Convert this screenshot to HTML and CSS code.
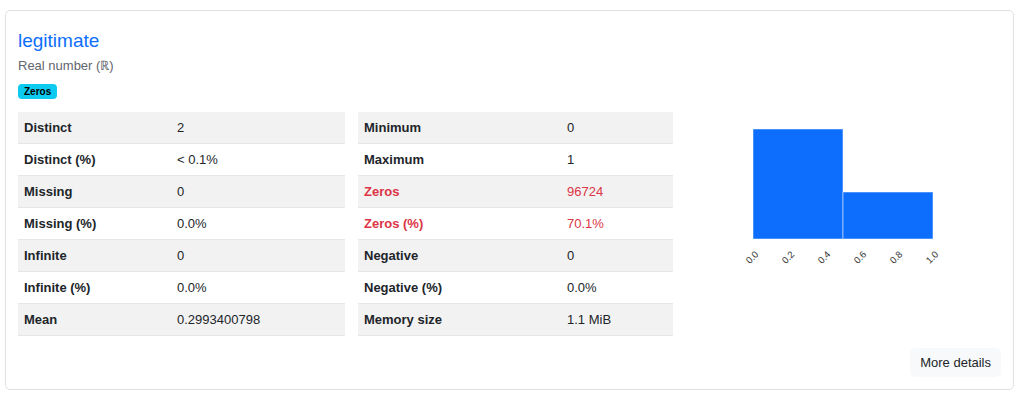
FILE: index.html
```html
<!DOCTYPE html>
<html>
<head>
  <meta name="viewport" content="width=device-width, initial-scale=1">
  <link rel="stylesheet" href="styles.css">
</head>
<body>
  <div class="card">
    <div class="title">legitimate</div>
    <div class="subtitle">Real number (&#8477;)</div>
    <span class="badge">Zeros</span>
    <div class="stats">
      <table class="table first">
        <tr><th>Distinct</th><td>2</td></tr>
        <tr><th>Distinct (%)</th><td>&lt; 0.1%</td></tr>
        <tr><th>Missing</th><td>0</td></tr>
        <tr><th>Missing (%)</th><td>0.0%</td></tr>
        <tr><th>Infinite</th><td>0</td></tr>
        <tr><th>Infinite (%)</th><td>0.0%</td></tr>
        <tr><th>Mean</th><td>0.2993400798</td></tr>
      </table>
      <table class="table second">
        <tr><th>Minimum</th><td>0</td></tr>
        <tr><th>Maximum</th><td>1</td></tr>
        <tr class="alert"><th>Zeros</th><td>96724</td></tr>
        <tr class="alert"><th>Zeros (%)</th><td>70.1%</td></tr>
        <tr><th>Negative</th><td>0</td></tr>
        <tr><th>Negative (%)</th><td>0.0%</td></tr>
        <tr><th>Memory size</th><td>1.1 MiB</td></tr>
      </table>
      <div class="chart">
        <svg width="315" height="170" viewBox="0 0 315 170">
          <rect x="67" y="17" width="90" height="110" fill="#0d6efd" stroke="#fff" stroke-opacity="0.5"/>
          <rect x="157" y="80" width="90" height="47" fill="#0d6efd" stroke="#fff" stroke-opacity="0.5"/>
          <g class="ticks" text-anchor="end">
            <text transform="translate(73 143) rotate(-45)">0.0</text>
            <text transform="translate(109 143) rotate(-45)">0.2</text>
            <text transform="translate(145 143) rotate(-45)">0.4</text>
            <text transform="translate(181 143) rotate(-45)">0.6</text>
            <text transform="translate(217 143) rotate(-45)">0.8</text>
            <text transform="translate(253 143) rotate(-45)">1.0</text>
          </g>
        </svg>
      </div>
    </div>
    <div class="actions">
      <button class="more">More details</button>
    </div>
  </div>
</body>
</html>
```

FILE: styles.css
```css
* { box-sizing: border-box; }
body { margin: 10px 10px 0 5px; font-family: 'Liberation Sans', Arial, sans-serif; color: #212529; background: #fff; }
.card { border: 1px solid #dfe1e4; border-radius: 5px; padding: 12px; }
.title { margin-top: 6px; font-size: 19px; line-height: 23px; color: #0d6efd; }
.subtitle { margin-top: 4px; font-size: 13px; line-height: 20px; color: #5f666d; }
.badge { display: inline-block; margin-top: 8px; padding: 2px 6px; border-radius: 4px; background: #0dcaf0; color: #000; font-size: 10px; font-weight: bold; line-height: 11px; }
.stats { display: grid; grid-template-columns: 327px 315px 1fr; column-gap: 13px; margin-top: 13px; }
.table { border-collapse: collapse; width: 100%; font-size: 13px; line-height: 19px; }
.table th, .table td { padding: 6px 7px 6px 6px; border-bottom: 1px solid #e4e6e8; text-align: left; white-space: nowrap; }
.table th { font-weight: bold; }
.first th { width: 153px; }
.second th { width: 203px; }
.table tr:nth-child(odd) { background: #f2f2f2; }
.alert th, .alert td { color: #dc3545; }
.chart svg { display: block; }
.ticks { font-size: 9.5px; fill: #333; font-family: 'Liberation Sans', Arial, sans-serif; }
.actions { display: flex; justify-content: flex-end; margin-top: 12px; }
.more { border: none; border-radius: 5px; background: #f8f9fa; color: #212529; font-family: inherit; font-size: 13px; line-height: 19px; padding: 5px 10px; }
```
